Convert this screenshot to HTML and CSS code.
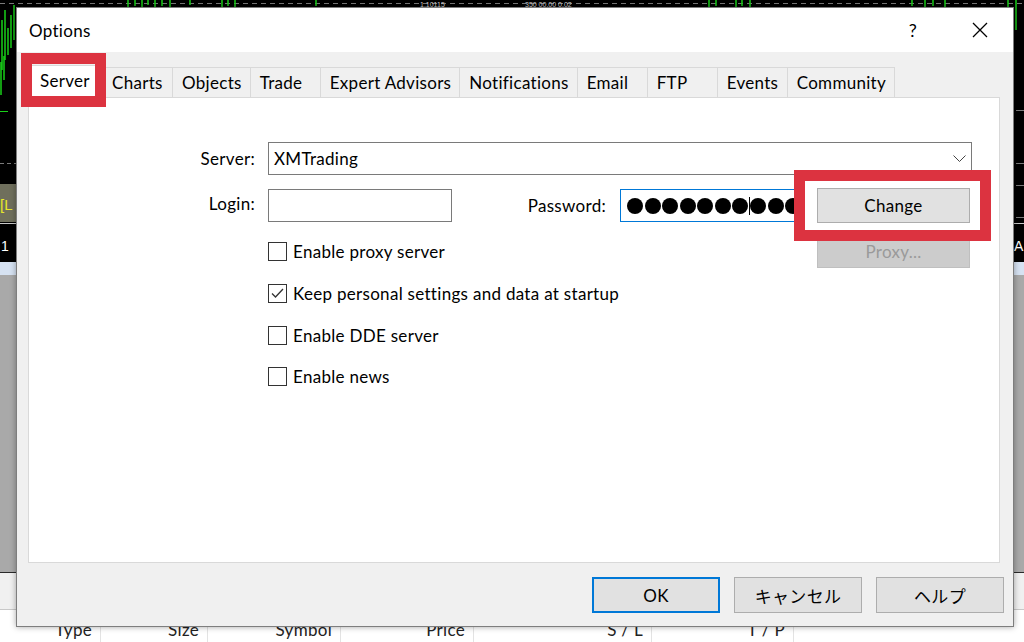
FILE: index.html
```html
<!DOCTYPE html>
<html lang="en">

<head>
  <meta charset="UTF-8" />
  <title>Options</title>
  <meta name="viewport" content="width=device-width, initial-scale=1.0" />
  <link rel="stylesheet" href="styles.css">
</head>

<body>
  <!-- terminal behind the dialog -->
  <div class="terminal">
    <div class="chart">
      <svg class="chart-svg" width="1024" height="262" viewBox="0 0 1024 262">
        <line x1="0" y1="3.5" x2="1024" y2="3.5" stroke="#7a7a7a" stroke-dasharray="5 4" />
        <g stroke="#19d119" stroke-width="1.5">
          <line x1="128" y1="0" x2="128" y2="7" />
          <line x1="135" y1="0" x2="135" y2="6" />
          <line x1="142" y1="0" x2="142" y2="7" />
          <line x1="148" y1="0" x2="148" y2="5" />
          <line x1="155" y1="0" x2="155" y2="7" />
          <line x1="162" y1="0" x2="162" y2="6" />
          <line x1="170" y1="0" x2="170" y2="7" />
          <line x1="190" y1="0" x2="190" y2="5" />
          <line x1="222" y1="0" x2="222" y2="7" />
          <line x1="228" y1="0" x2="228" y2="6" />
          <line x1="235" y1="0" x2="235" y2="7" />
          <line x1="316" y1="0" x2="316" y2="6" />
          <line x1="709" y1="0" x2="709" y2="7" />
          <line x1="716" y1="0" x2="716" y2="6" />
          <line x1="736" y1="0" x2="736" y2="7" />
          <line x1="742" y1="0" x2="742" y2="6" />
          <line x1="750" y1="0" x2="750" y2="7" />
          <line x1="912" y1="0" x2="912" y2="6" />
          <line x1="925" y1="0" x2="925" y2="7" />
          <line x1="933" y1="0" x2="933" y2="6" />
          <line x1="945" y1="0" x2="945" y2="7" />
          <line x1="1008" y1="0" x2="1008" y2="7" />
          <line x1="1016" y1="0" x2="1016" y2="30" />
          <line x1="2" y1="20" x2="2" y2="70" />
          <line x1="5" y1="10" x2="5" y2="60" />
          <line x1="8" y1="28" x2="8" y2="55" />
          <line x1="11" y1="15" x2="11" y2="48" />
          <line x1="14" y1="5" x2="14" y2="40" />
          <line x1="1" y1="62" x2="1" y2="95" />
          <line x1="4" y1="56" x2="4" y2="80" />
        </g>
        <text x="420" y="6.5" fill="#d0d0d0" font-size="7" font-family="Liberation Sans, sans-serif">1.10115</text>
        <text x="525" y="6.5" fill="#d0d0d0" font-size="7" font-family="Liberation Sans, sans-serif">350 00.00 0.02</text>
        <line x1="0" y1="111.5" x2="8" y2="111.5" stroke="#19d119" />
        <line x1="0" y1="163.5" x2="16" y2="163.5" stroke="#7a7a7a" stroke-dasharray="4 3" />
        <line x1="1016" y1="110.5" x2="1024" y2="110.5" stroke="#7a7a7a" />
        <line x1="1016" y1="163.5" x2="1024" y2="163.5" stroke="#7a7a7a" />
        <line x1="1016" y1="185.5" x2="1024" y2="185.5" stroke="#7a7a7a" />
        <line x1="1016" y1="217.5" x2="1024" y2="217.5" stroke="#7a7a7a" />
        <rect x="0" y="184" width="16" height="38" fill="#6f6f5c" />
        <text x="0" y="210" fill="#e8e82a" font-size="15" font-family="Liberation Sans, sans-serif">[L</text>
        <line x1="0" y1="223.5" x2="16" y2="223.5" stroke="#c8c8c8" />
        <line x1="1014" y1="223.5" x2="1024" y2="223.5" stroke="#c8c8c8" />
        <text x="1" y="251" fill="#ffffff" font-size="14" font-family="Liberation Sans, sans-serif">1</text>
        <text x="1014" y="251" fill="#ffffff" font-size="14" font-family="Liberation Sans, sans-serif">A</text>
      </svg>
    </div>
    <div class="tab-strip"></div>
    <div class="gray-area"></div>
    <div class="toolbox-bar"></div>
    <div class="trade-head">
      <div class="col col-type">Type</div>
      <div class="col col-size">Size</div>
      <div class="col col-symbol">Symbol</div>
      <div class="col col-price">Price</div>
      <div class="col col-sl">S / L</div>
      <div class="col col-tp">T / P</div>
      <div class="col col-rest"></div>
    </div>
  </div>

  <div class="dialog">
    <div class="title-bar">
      <span class="title">Options</span>
      <span class="help">?</span>
      <span class="close">
        <svg width="16" height="16" viewBox="0 0 16 16">
          <path d="M1 1 L15 15 M15 1 L1 15" stroke="#000" stroke-width="1.3" fill="none" />
        </svg>
      </span>
    </div>

    <div class="dialog-body">
      <div class="tabs">
        <div class="tab active">Server</div>
        <div class="tab">Charts</div>
        <div class="tab">Objects</div>
        <div class="tab">Trade</div>
        <div class="tab">Expert Advisors</div>
        <div class="tab">Notifications</div>
        <div class="tab">Email</div>
        <div class="tab">FTP</div>
        <div class="tab">Events</div>
        <div class="tab">Community</div>
      </div>

      <div class="panel">
        <div class="row row-server">
          <label class="lbl">Server:</label>
          <div class="combo">
            <span>XMTrading</span>
            <svg class="chevron" width="13" height="7" viewBox="0 0 13 7">
              <polyline points="0.5,0.5 6.5,6.5 12.5,0.5" stroke="#444" fill="none" />
            </svg>
          </div>
        </div>

        <div class="row row-login">
          <label class="lbl">Login:</label>
          <div class="field login"></div>
          <label class="lbl-pass">Password:</label>
          <div class="field pass">
            <span class="dot"></span><span class="dot"></span><span class="dot"></span><span class="dot"></span><span class="dot"></span><span class="dot"></span><span class="dot"></span><span class="caret"></span><span class="dot"></span><span class="dot"></span><span class="dot"></span>
          </div>
          <button class="btn change">Change</button>
        </div>

        <div class="row row-proxy">
          <div class="check">
            <span class="box"></span>Enable proxy server
          </div>
          <button class="btn proxy" disabled>Proxy...</button>
        </div>

        <div class="check-list">
          <div class="check check-row">
            <span class="box">
              <svg width="17" height="17" viewBox="0 0 17 17">
                <polyline points="3,8.5 6.5,12 14,4" stroke="#333" stroke-width="1.3" fill="none" />
              </svg>
            </span>Keep personal settings and data at startup
          </div>
          <div class="check check-row">
            <span class="box"></span>Enable DDE server
          </div>
          <div class="check check-row">
            <span class="box"></span>Enable news
          </div>
        </div>
      </div>

      <div class="footer">
        <button class="btn dlg-btn default">OK</button>
        <button class="btn dlg-btn">キャンセル</button>
        <button class="btn dlg-btn">ヘルプ</button>
      </div>
    </div>

    <!-- red highlight marks -->
    <div class="mark mark-tab"></div>
    <div class="mark mark-change"></div>
  </div>
</body>

</html>
```

FILE: styles.css
```css
* {
  box-sizing: border-box;
}

body {
  margin: 0;
  width: 1024px;
  height: 642px;
  overflow: hidden;
  position: relative;
  background: #000;
  color: #000;
  font-family: Lato, "Noto Sans CJK JP", sans-serif;
  font-size: 17px;
}

/* background terminal */

.terminal {
  display: flex;
  flex-direction: column;
  height: 642px;
}

.chart {
  height: 262px;
  background: #000;
}

.chart-svg {
  display: block;
}

.tab-strip {
  height: 13px;
  background: #d6e2f2;
}

.gray-area {
  height: 298px;
  background: #a9a9a9;
  border-bottom: 1px solid #2a2a2a;
}

.toolbox-bar {
  height: 37px;
  background: #f0f0f0;
  border-bottom: 1px solid #c8c8c8;
}

.trade-head {
  flex: 1;
  display: flex;
  background: #fff;
  letter-spacing: 0.3px;
}

.col {
  text-align: right;
  padding: 8px 8px 0 0;
  line-height: 24px;
  border-right: 1px solid #e3e3e3;
  color: #222;
}

.col-type { width: 101px; }
.col-size { width: 107px; }
.col-symbol { width: 133px; }
.col-price { width: 133px; }
.col-sl { width: 178px; }
.col-tp { width: 142px; }
.col-rest { flex: 1; border-right: none; }

/* dialog */

.dialog {
  position: absolute;
  left: 16px;
  top: 7px;
  width: 998px;
  height: 620px;
  border: 1px solid #7e7e7e;
  background: #f0f0f0;
  box-shadow: 0 0 6px rgba(0, 0, 0, 0.35);
  display: flex;
  flex-direction: column;
  letter-spacing: 0.3px;
}

.title-bar {
  height: 44px;
  background: #fff;
  display: flex;
  align-items: center;
  padding-left: 12px;
}

.title {
  flex: 1;
}

.help {
  width: 34px;
  margin-right: 17px;
  text-align: center;
  font-size: 18px;
}

.close {
  width: 66px;
  display: flex;
  justify-content: center;
}

.dialog-body {
  flex: 1;
  display: flex;
  flex-direction: column;
  padding: 15px 13px 13px 11px;
}

.tabs {
  display: flex;
  align-items: flex-end;
  height: 30px;
  position: relative;
  z-index: 1;
}

.tab {
  height: 30px;
  min-width: 71px;
  padding: 1px 8px 0 9px;
  margin-right: -1px;
  border: 1px solid #d9d9d9;
  border-bottom: none;
  background: #f0f0f0;
  line-height: 28px;
  letter-spacing: 0.3px;
  white-space: nowrap;
}

.tab.active {
  position: relative;
  z-index: 1;
  width: 78px;
  height: 33px;
  margin-right: -4px;
  margin-bottom: -1px;
  padding: 0 0 0 11px;
  background: #fff;
  line-height: 30px;
}

.panel {
  height: 466px;
  background: #fff;
  border: 1px solid #d9d9d9;
  padding-top: 44px;
}

.row {
  display: flex;
  align-items: center;
}

.lbl {
  width: 226px;
  margin-right: 13px;
  text-align: right;
}

.combo {
  width: 704px;
  height: 33px;
  border: 1px solid #7a7a7a;
  display: flex;
  align-items: center;
  justify-content: space-between;
  padding: 0 5px 0 5px;
}

.row-login {
  margin-top: 13px;
  height: 35px;
}

.row-login .lbl {
  margin-top: -4px;
}

.field {
  height: 33px;
  border: 1px solid #7a7a7a;
}

.login {
  width: 184px;
}

.lbl-pass {
  width: 154px;
  margin-right: 14px;
  text-align: right;
}

.pass {
  width: 185px;
  border-color: #0078d7;
  display: flex;
  align-items: center;
  gap: 1.5px;
  padding-left: 6px;
  overflow: hidden;
}

.dot {
  flex: none;
  width: 16px;
  height: 16px;
  border-radius: 50%;
  background: #000;
}

.caret {
  flex: none;
  width: 1px;
  height: 18px;
  background: #000;
  margin: 0 -1px;
}

.btn {
  font-family: Lato, "Noto Sans CJK JP", sans-serif;
  font-size: 17px;
  letter-spacing: 0.3px;
  color: #000;
  background: #e1e1e1;
  border: 1px solid #adadad;
  padding: 0;
}

.change {
  width: 153px;
  height: 35px;
  margin-left: 12px;
}

.row-proxy {
  margin-top: 11px;
  height: 34px;
  padding-left: 239px;
  padding-right: 29px;
}

.row-proxy .check {
  flex: 1;
}

.proxy {
  width: 153px;
  height: 34px;
  background: #cccccc;
  border-color: #bfbfbf;
  color: #9a9a9a;
}

.check {
  display: flex;
  align-items: center;
  gap: 6px;
}

.check-list {
  margin-top: 5px;
}

.check-row {
  height: 41.5px;
  padding-left: 239px;
}

.box {
  width: 19px;
  height: 19px;
  border: 1px solid #333;
  display: flex;
  align-items: center;
  justify-content: center;
}

.footer {
  display: flex;
  justify-content: flex-end;
  gap: 14px;
  margin-top: 14px;
  margin-right: -4px;
}

.dlg-btn {
  width: 128px;
  height: 36px;
}

.dlg-btn.default {
  border: 2px solid #0078d7;
}

/* red annotation boxes */

.mark {
  position: absolute;
  border: 11px solid #dc3340;
  z-index: 2;
}

.mark-tab {
  left: 4px;
  top: 45px;
  width: 85px;
  height: 54px;
}

.mark-change {
  left: 777px;
  top: 162px;
  width: 197px;
  height: 71px;
}
```
